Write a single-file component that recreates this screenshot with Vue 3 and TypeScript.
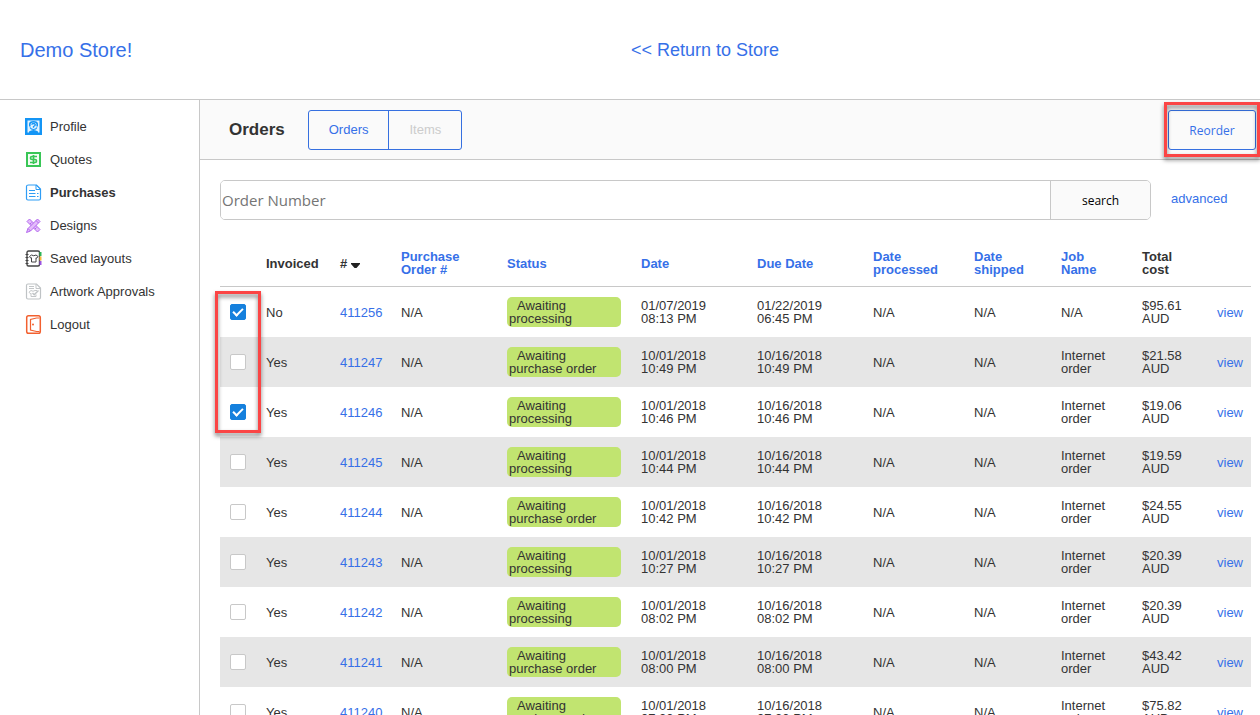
<script setup lang="ts">
import { reactive, ref } from 'vue'

interface Order {
  id: string
  invoiced: string
  status: string
  date: [string, string]
  due: [string, string]
  job: string
  cost: string
  selected: boolean
}

const menu = [
  { icon: 'profile', label: 'Profile' },
  { icon: 'quotes', label: 'Quotes' },
  { icon: 'purchases', label: 'Purchases' },
  { icon: 'designs', label: 'Designs' },
  { icon: 'layouts', label: 'Saved layouts' },
  { icon: 'approvals', label: 'Artwork Approvals' },
  { icon: 'logout', label: 'Logout' },
]
const active = 'Purchases'
const query = ref('')

function order(id: string, invoiced: string, status: string, day: string, dueDay: string, time: string, job: string, cost: string, selected = false, dueTime = time): Order {
  return { id, invoiced, status, date: [day, time], due: [dueDay, dueTime], job, cost, selected }
}

const oct = '10/01/2018'
const octDue = '10/16/2018'
const orders = reactive<Order[]>([
  order('411256', 'No', 'processing', '01/07/2019', '01/22/2019', '08:13 PM', 'N/A', '$95.61', true, '06:45 PM'),
  order('411247', 'Yes', 'purchase order', oct, octDue, '10:49 PM', 'Internet order', '$21.58'),
  order('411246', 'Yes', 'processing', oct, octDue, '10:46 PM', 'Internet order', '$19.06', true),
  order('411245', 'Yes', 'processing', oct, octDue, '10:44 PM', 'Internet order', '$19.59'),
  order('411244', 'Yes', 'purchase order', oct, octDue, '10:42 PM', 'Internet order', '$24.55'),
  order('411243', 'Yes', 'processing', oct, octDue, '10:27 PM', 'Internet order', '$20.39'),
  order('411242', 'Yes', 'processing', oct, octDue, '08:02 PM', 'Internet order', '$20.39'),
  order('411241', 'Yes', 'purchase order', oct, octDue, '08:00 PM', 'Internet order', '$43.42'),
  order('411240', 'Yes', 'purchase order', oct, octDue, '07:20 PM', 'Internet order', '$75.82'),
])
</script>

<template>
  <div class="page">
    <header class="top">
      <a class="brand" href="#">Demo Store!</a>
      <a class="return" href="#">&lt;&lt; Return to Store</a>
    </header>
    <div class="body">
      <nav class="side">
        <a v-for="m in menu" :key="m.label" href="#" class="item" :class="{ active: m.label === active }">
          <svg class="icon" viewBox="0 0 17 17" fill="none" aria-hidden="true">
            <template v-if="m.icon === 'profile'">
              <rect width="17" height="17" fill="#1495f5" />
              <path d="M2.500 2.500h12v12h-12z" fill="#e4f3fe" />
              <path d="M4 15v-1.500Q6 12 8.500 12t4.500 1.500V15z" fill="#1495f5" />
              <path d="M4.800 8.500V6q0-2.300 3.700-2.300T12.200 6v2.500" stroke="#1495f5" stroke-width="1.600" />
              <path d="M6.700 6.700q.2-1.200 1.800-1.200t1.800 1.200-1.800 1.800v1.200" stroke="#1495f5" stroke-width="1.300" />
              <path d="M5 9.500q1 2 3.500 2t3.500-2" stroke="#1495f5" stroke-width="1.200" />
            </template>
            <template v-else-if="m.icon === 'quotes'">
              <rect x="2" y="2" width="13" height="13" stroke="#39c656" stroke-width="2" fill="#f4fcf5" />
              <path d="M12 5.500H7q-1.500 0-1.500 1.500T7 8.500h3q1.500 0 1.500 1.500T10 11.500H5M8.500 4v9" stroke="#39c656" stroke-width="1.700" />
            </template>
            <template v-else-if="m.icon === 'purchases'">
              <path d="M3.500 1h8L15.500 5v9.500q0 1.500-1.500 1.500H3q-1.500 0-1.500-1.500V2.500Q1.500 1 3.500 1z" stroke="#2f9df5" stroke-width="1.200" />
              <path d="M11 1v4.500h4.500zM4 6.500h6M4 9.500h6.500M4 12.500h6.500M12 9.500h1.500M12 12.500h1.500" stroke="#2f9df5" />
            </template>
            <template v-else-if="m.icon === 'designs'">
              <path d="M2 4.500 4.500 2 15 12.500 12.500 15z" fill="#e4bcfb" stroke="#b368ee" />
              <path d="M5 7l1.500-1.500M7.500 9.500 9 8M10 12l1.500-1.500" stroke="#b368ee" />
              <path d="M12.500 2 15 4.500 5.500 14 1.500 15.500 3 11.500z" fill="#e4bcfb" stroke="#b368ee" />
              <path d="M11 3.500 13.500 6M3 11.500 5.500 14" stroke="#b368ee" />
            </template>
            <template v-else-if="m.icon === 'layouts'">
              <rect x="2" y="1" width="12.500" height="15" rx="1.500" stroke="#444" stroke-width="1.400" />
              <path d="M0.500 4.500h3M0.500 7.500h3M0.500 10.500h3M0.500 13.500h3" stroke="#444" />
              <path d="M6.500 5 4.500 6.500l1.300 1.700.7-.4v4.200h4.500V7.800l.7.4L13 6.500 11 5q-2.200 1.500-4.500 0z" stroke="#444" />
              <path d="M15.500 2v4" stroke="#2fb457" stroke-width="2" />
              <path d="M15.500 6.500v4" stroke="#f5b83d" stroke-width="2" />
              <path d="M15.500 11v4" stroke="#9a55e0" stroke-width="2" />
            </template>
            <template v-else-if="m.icon === 'approvals'">
              <path d="M3 1h8.500L15.500 5v9.500q0 1.500-1.500 1.500H3q-1.500 0-1.500-1.500v-12Q1.500 1 3 1z" stroke="#bfc3c5" stroke-width="1.200" />
              <path d="M11 1v4.500h4.500M4 3.500h5M4 5.500h5M6 7.500l-2 1.700 1.300 1.500.7-.5v3.300h5v-2M6 7.500q2 1.500 4 0h2" stroke="#c3c6c8" />
              <path d="M7.500 10l1.700 1.700L13.500 7.500" stroke="#bfc3c5" stroke-width="1.400" />
            </template>
            <template v-else>
              <rect x="1.700" y="-0.300" width="13.600" height="17.600" rx="1.800" stroke="#f2602f" stroke-width="1.500" />
              <path d="M14.500 2H11.500L5.500 3.500v10.500l6 1.500h3" stroke="#f2602f" stroke-width="1.200" />
              <circle cx="8" cy="8.500" r="1" fill="#f2602f" />
            </template>
          </svg>
          <span>{{ m.label }}</span>
        </a>
      </nav>
      <main class="main">
        <div class="toolbar">
          <h1>Orders</h1>
          <div class="tabs">
            <button type="button">Orders</button>
            <button type="button" disabled>Items</button>
          </div>
          <div class="reorder">
            <button type="button">Reorder</button>
            <div class="callout"></div>
          </div>
        </div>
        <div class="content">
          <form class="find" @submit.prevent>
            <div class="field">
              <input v-model="query" type="text" placeholder="Order Number" aria-label="Order Number" />
              <button type="submit">search</button>
            </div>
            <a href="#">advanced</a>
          </form>
          <div class="list">
            <table>
              <colgroup>
                <col class="w36" /><col class="w74" /><col class="w61" /><col class="w106" />
                <col class="w134" /><col class="w116" /><col class="w116" /><col class="w101" />
                <col class="w87" /><col class="w81" /><col class="w75" /><col class="w44" />
              </colgroup>
              <thead>
                <tr>
                  <th></th>
                  <th>Invoiced</th>
                  <th class="sorted"># <svg width="9" height="5" viewBox="0 0 9 5" aria-hidden="true"><path d="M0 0h9v1L5.500 5h-2L0 1z" fill="#222" /></svg></th>
                  <th><a href="#">Purchase Order #</a></th>
                  <th><a href="#">Status</a></th>
                  <th><a href="#">Date</a></th>
                  <th><a href="#">Due Date</a></th>
                  <th><a href="#">Date processed</a></th>
                  <th><a href="#">Date shipped</a></th>
                  <th><a href="#">Job<br />Name</a></th>
                  <th>Total<br />cost</th>
                  <th></th>
                </tr>
              </thead>
              <tbody>
                <tr v-for="o in orders" :key="o.id">
                  <td><input v-model="o.selected" type="checkbox" :aria-label="'Select order ' + o.id" /></td>
                  <td>{{ o.invoiced }}</td>
                  <td><a href="#">{{ o.id }}</a></td>
                  <td>N/A</td>
                  <td><div class="status">Awaiting<br />{{ o.status }}</div></td>
                  <td>{{ o.date[0] }}<br />{{ o.date[1] }}</td>
                  <td>{{ o.due[0] }}<br />{{ o.due[1] }}</td>
                  <td>N/A</td>
                  <td>N/A</td>
                  <td>{{ o.job }}</td>
                  <td>{{ o.cost }}<br />AUD</td>
                  <td><a href="#">view</a></td>
                </tr>
              </tbody>
            </table>
            <div class="callout picks"></div>
          </div>
        </div>
      </main>
    </div>
  </div>
</template>

<style>
body {
  margin: 0;
  background: #fff;
}
</style>

<style scoped>
* {
  box-sizing: border-box;
}
.page {
  height: 100vh;
  display: flex;
  flex-direction: column;
  overflow: hidden;
  font: 13px/13px "Liberation Sans", Arial, sans-serif;
  color: #333;
}
a {
  color: #3670e8;
  text-decoration: none;
}
button,
input {
  margin: 0;
  font-family: "Open Sans", Tahoma, sans-serif;
}
.top {
  flex: none;
  display: grid;
  grid-template-columns: 1fr 1fr;
  align-items: center;
  height: 100px;
  border-bottom: 1px solid #c8c8c8;
}
.brand {
  padding-left: 20px;
  font-size: 20px;
  line-height: 24px;
}
.return {
  padding-left: 1px;
  font-size: 18px;
  line-height: 24px;
}
.body {
  flex: 1;
  min-height: 0;
  display: flex;
}
.side {
  flex: none;
  width: 200px;
  padding: 10px 0 0 25px;
  border-right: 1px solid #c8c8c8;
}
.item {
  display: flex;
  align-items: center;
  gap: 8px;
  height: 33px;
  color: #333;
}
.item.active {
  font-weight: bold;
}
.icon {
  width: 17px;
  height: 17px;
  overflow: visible;
}
.main {
  flex: 1;
  min-width: 0;
  overflow: hidden auto;
  scrollbar-width: none;
}
.toolbar {
  display: flex;
  align-items: center;
  height: 60px;
  padding: 0 4px 0 29px;
  background: #fafafa;
  border-bottom: 1px solid #c8c8c8;
}
h1 {
  margin: 0 23px 0 0;
  font-size: 17px;
  line-height: 20px;
}
.tabs {
  display: flex;
  height: 40px;
  border: 1px solid #3670e0;
  border-radius: 3px;
}
.tabs button {
  padding: 0 20px;
  border: 0;
  background: none;
  font: 13px "Liberation Sans", Arial, sans-serif;
  color: #3670e8;
}
.tabs button + button {
  border-left: 1px solid #3670e0;
}
.tabs button:disabled {
  color: #ccc;
}
.reorder {
  position: relative;
  margin-left: auto;
}
.reorder button {
  display: block;
  width: 88px;
  height: 40px;
  padding: 2px 0 0;
  border: 1px solid #3670e0;
  border-radius: 3px;
  background: none;
  font-size: 12px;
  color: #3670e8;
}
.callout {
  position: absolute;
  inset: -8px -4px -7px;
  border: 3px solid #fb4545;
  filter: drop-shadow(0 3px 2px rgba(0, 0, 0, 0.5));
  pointer-events: none;
}
.content {
  padding: 20px 9px 0 20px;
}
.find {
  display: flex;
  margin-bottom: 20px;
}
.field {
  flex: 1;
  display: flex;
  height: 40px;
  border: 1px solid #c8c8c8;
  border-radius: 5px;
  overflow: hidden;
}
.field input {
  flex: 1;
  min-width: 0;
  padding: 0 1px;
  border: 0;
  background: #fff;
  font-size: 15px;
  color: #333;
}
.field input::placeholder {
  color: #757575;
}
.field button {
  width: 100px;
  padding: 0;
  border: 0;
  border-left: 1px solid #c8c8c8;
  background: #fafafa;
  font-size: 12px;
  color: #000;
}
.find > a {
  width: 100px;
  padding: 12px 0 0 20px;
}
.list {
  position: relative;
}
table {
  width: 100%;
  table-layout: fixed;
  border-collapse: separate;
  border-spacing: 0;
}
.w36 { width: 36px; }
.w74 { width: 74px; }
.w61 { width: 61px; }
.w106 { width: 106px; }
.w134 { width: 134px; }
.w116 { width: 116px; }
.w101 { width: 101px; }
.w87 { width: 87px; }
.w81 { width: 81px; }
.w75 { width: 75px; }
.w44 { width: 44px; }
th,
td {
  padding: 0 10px;
  text-align: left;
  vertical-align: middle;
}
th {
  height: 47px;
  border-bottom: 1px solid #c8c8c8;
}
.sorted {
  white-space: nowrap;
}
td {
  height: 50px;
}
tbody tr:nth-child(even) {
  background: #e6e6e6;
}
td input {
  appearance: none;
  display: block;
  width: 16px;
  height: 16px;
  border: 1px solid #c8c8c8;
  border-radius: 2px;
  background: #fff;
}
td input:checked {
  border-color: #1580dd;
  background: #1580dd;
}
td input:checked::after {
  content: "";
  box-sizing: border-box;
  display: block;
  width: 10px;
  height: 6px;
  margin: 3px 2px;
  border: solid #fff;
  border-width: 0 0 2px 2px;
  transform: rotate(-45deg);
}
.status {
  width: 114px;
  height: 30px;
  padding: 2px;
  border-radius: 5px;
  background: #c1e470;
  text-indent: 8px;
}
.callout.picks {
  inset: 51px auto auto -5px;
  width: 46px;
  height: 142px;
}
</style>
